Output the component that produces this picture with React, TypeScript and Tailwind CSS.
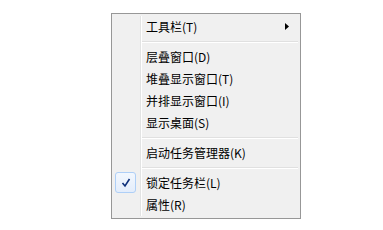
import React from "react";

type Item = { label: string; sep?: boolean; arrow?: boolean; checked?: boolean };

const items: Item[] = [
  { label: "工具栏(T)", arrow: true },
  { label: "", sep: true },
  { label: "层叠窗口(D)" },
  { label: "堆叠显示窗口(T)" },
  { label: "并排显示窗口(I)" },
  { label: "显示桌面(S)" },
  { label: "", sep: true },
  { label: "启动任务管理器(K)" },
  { label: "", sep: true },
  { label: "锁定任务栏(L)", checked: true },
  { label: "属性(R)" },
];

export default function App() {
  return (
    <div className="relative w-[383px] h-[230px] bg-white overflow-hidden">
      <div
        className="absolute left-[111px] top-[13px] w-[190px] border border-[#979797] bg-[#f0f0f0] p-[2px] text-[12px] text-black"
        style={{ fontFamily: '"Microsoft YaHei","Noto Sans CJK SC",sans-serif' }}
      >
        <div className="absolute left-[28px] top-[2px] bottom-[2px] w-[2px] flex">
          <div className="w-px h-full bg-[#e2e3e3]" />
          <div className="w-px h-full bg-white" />
        </div>
        <div className="relative flex flex-col">
          {items.map((it, i) =>
            it.sep ? (
              <div key={i} className="h-[8px] pl-[28px] pt-[3px]">
                <div className="h-px bg-[#e0e0e0]" />
                <div className="h-px bg-white" />
              </div>
            ) : (
              <div key={i} className="relative h-[22px] flex items-center pl-[32px] leading-none">
                {it.checked && (
                  <div className="absolute left-[1px] top-0 w-[21px] h-[21px] rounded-[3px] border border-[#aecff7] bg-[linear-gradient(#f2f7fe,#e3edfb)] flex items-center justify-center">
                    <svg width="10" height="10" viewBox="0 0 10 10">
                      <path d="M1.5 5 L4 8 L8.5 1" fill="none" stroke="#0c2f7a" strokeWidth="1.6" />
                    </svg>
                  </div>
                )}
                <span>{it.label}</span>
                {it.arrow && (
                  <svg className="absolute left-[171px] top-[7px]" width="4" height="7" viewBox="0 0 4 7">
                    <path d="M0 0 L4 3.5 L0 7 Z" fill="#000" />
                  </svg>
                )}
              </div>
            )
          )}
        </div>
      </div>
    </div>
  );
}
